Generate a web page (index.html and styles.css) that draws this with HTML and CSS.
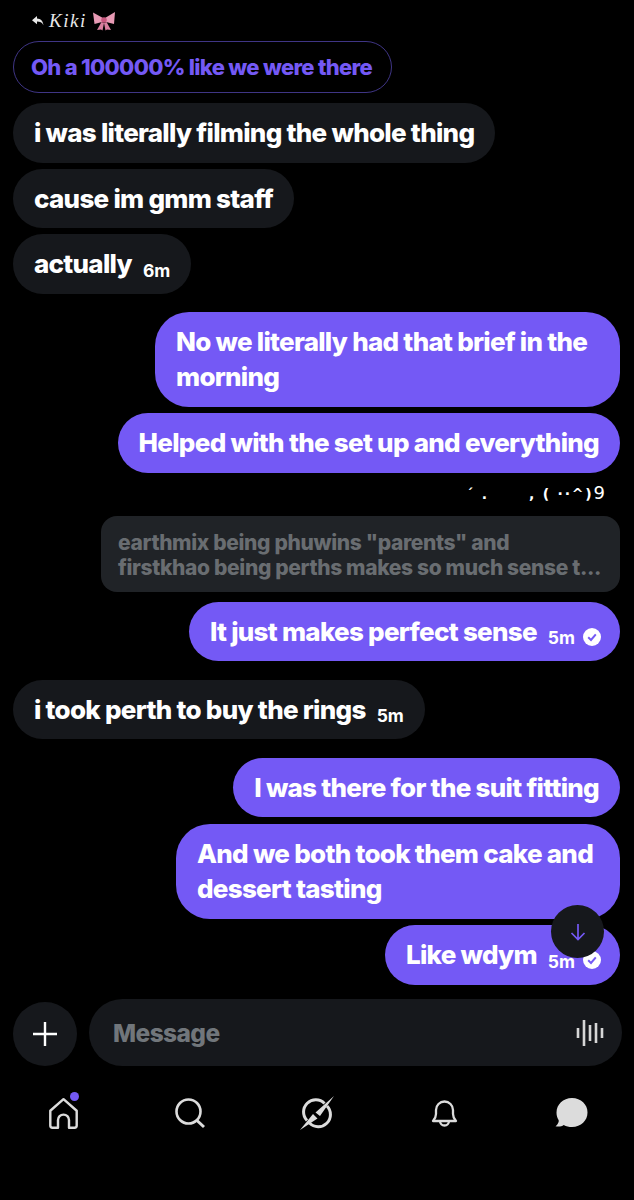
FILE: index.html
```html
<!DOCTYPE html>
<html lang="en">
<head>
<meta charset="utf-8">
<title>Chat</title>
<link rel="stylesheet" href="styles.css">
</head>
<body>
<div class="screen">
  <main class="thread">
    <div class="reply-label">
      <svg class="reply-arrow" viewBox="0 0 12 10"><path d="M5 0 0 4.200 5 8.200V5.600c3 0 5 .8 6.400 3.600C11.200 5 8.500 2.600 5 2.500Z" fill="#e8e8e8"/></svg>
      <span class="reply-name">Kiki</span>
      <svg class="bow" viewBox="0 0 24 20"><path d="M11 7 1 1.500 2.500 13 10 11ZM13 7 23 1 22 13 14 11Z" fill="#e79ab4"/><path d="M9.500 11 5 19l4-.5 1.500 1L12 12ZM14.500 11 19 19l-4-.5-1.500 1L12 12Z" fill="#d97f9f"/><circle cx="12" cy="9" r="2.800" fill="#c9577f"/></svg>
    </div>
    <div class="bubble quoted">Oh a 100000% like we were there</div>
    <div class="group">
      <div class="bubble in">i was literally filming the whole thing</div>
      <div class="bubble in">cause im gmm staff</div>
      <div class="bubble in">actually<span class="time">6m</span></div>
    </div>
    <div class="group out-group gap-a">
      <div class="bubble out two">No we literally had that brief in the morning</div>
      <div class="bubble out">Helped with the set up and everything</div>
    </div>
    <div class="kaomoji">´ .&nbsp;&nbsp;&nbsp;&nbsp;&nbsp;&nbsp;, ( ··^)<span class="kao-nine">9</span></div>
    <div class="bubble shared">earthmix being phuwins "parents" and<br>firstkhao being perths makes so much sense t...</div>
    <div class="bubble out align-right gap-b">It just makes perfect sense<span class="time">5m</span><svg class="check" viewBox="0 0 18 18"><circle cx="9" cy="9" r="9" fill="#fff"/><path d="M5.200 9.300 8 12l4.800-5.600" fill="none" stroke="#7459f5" stroke-width="2"/></svg></div>
    <div class="bubble in align-left gap-c">i took perth to buy the rings<span class="time">5m</span></div>
    <div class="group out-group gap-c">
      <div class="bubble out">I was there for the suit fitting</div>
      <div class="bubble out two narrow">And we both took them cake and dessert tasting</div>
      <div class="bubble out">Like wdym<span class="time">5m</span><svg class="check" viewBox="0 0 18 18"><circle cx="9" cy="9" r="9" fill="#fff"/><path d="M5.200 9.300 8 12l4.800-5.600" fill="none" stroke="#7459f5" stroke-width="2"/></svg></div>
    </div>
    <button class="scroll-down" aria-label="Scroll to bottom">
      <svg viewBox="0 0 18 18" width="18" height="18"><path d="M9 1v15.500M2.500 10 9 16.500 15.500 10" fill="none" stroke="#7459f5" stroke-width="1.700"/></svg>
    </button>
  </main>

  <div class="composer">
    <button class="plus" aria-label="Add">
      <svg viewBox="0 0 24 24" width="24" height="24"><path d="M12 0v24M0 12h24" stroke="#fff" stroke-width="2.400"/></svg>
    </button>
    <div class="input">
      <span class="placeholder">Message</span>
      <svg class="wave" viewBox="0 0 28 28" width="28" height="28"><path d="M2 9v10M8 1v26M14 6v16M20 4v20M26 9v10" stroke="#d6d6d6" stroke-width="2.600"/></svg>
    </div>
  </div>

  <nav class="tabs">
    <div class="tab home">
      <svg viewBox="1 1 30 30" width="33" height="33"><path d="M4 13.500 16 3l12 10.500V27a2 2 0 0 1-2 2h-5v-7a5 5 0 0 0-10 0v7H6a2 2 0 0 1-2-2Z" fill="none" stroke="#dcdcdc" stroke-width="2.200" stroke-linejoin="round"/></svg>
      <span class="dot"></span>
    </div>
    <div class="tab">
      <svg viewBox="0 0 32 32" width="32" height="32"><circle cx="14.500" cy="14.500" r="12" fill="none" stroke="#dcdcdc" stroke-width="2.600"/><path d="M23 23.500 30 30" stroke="#dcdcdc" stroke-width="3"/></svg>
    </div>
    <div class="tab">
      <svg viewBox="0 0 38 38" width="38" height="38"><path d="M26.500 9.500A12 12 0 0 0 9 26.500M11.500 29A12 12 0 0 0 29 12" fill="none" stroke="#dcdcdc" stroke-width="3"/><path d="M36 2 22 22 17.500 18.500ZM2 36 15 20 19.500 24.500Z" fill="#dcdcdc"/></svg>
    </div>
    <div class="tab">
      <svg viewBox="-2 0 32 32" width="32" height="32"><path d="M3 24c1.800-2 3-4 3-7v-4a8.500 8.500 0 0 1 17 0v4c0 3 1.200 5 3 7ZM10 24a4.500 4.500 0 0 0 9 0" fill="none" stroke="#dcdcdc" stroke-width="2.300" stroke-linejoin="round"/></svg>
    </div>
    <div class="tab">
      <svg viewBox="0 0 34 32" width="34" height="32"><path d="M18 1C9 1 2.500 7.500 2.500 15.500c0 3 .8 5.500 2.200 7.700.4 2-1 4.300-3.200 6 3 .8 6.300.3 8.200-1.300 2.500 1.300 5.300 2.100 8.300 2.100 9 0 15.500-6.500 15.500-14.500S27 1 18 1Z" fill="#dcdcdc"/></svg>
    </div>
  </nav>
</div>
</body>
</html>
```

FILE: styles.css
```css
* { box-sizing: border-box; }
html, body { margin: 0; padding: 0; background: #000; }
body { font-family: Inter, "Liberation Sans", sans-serif; }
.screen { width: 634px; height: 1200px; background: #000; overflow: hidden; display: flex; flex-direction: column; }
.thread { position: relative; display: flex; flex-direction: column; align-items: flex-start; padding: 11px 14px 0 13px; height: 999px; }
.reply-label { display: flex; align-items: center; gap: 5px; height: 20px; margin: 0 0 10px 19px; color: #e8e8e8; }
.reply-arrow { width: 12px; height: 10px; }
.reply-name { font-family: "Liberation Serif", serif; font-style: italic; font-size: 19px; line-height: 20px; letter-spacing: 1.500px; }
.bow { width: 24px; height: 20px; }
.bubble { font-weight: 800; font-size: 26px; line-height: 35.500px; letter-spacing: -0.720px; padding: 12px 21px; border-radius: 30px; white-space: nowrap; }
.quoted { height: 52px; width: 379px; padding: 8px 17px; border: 1px solid #3f3585; color: #7459f5; border-radius: 26px; font-size: 22px; letter-spacing: -0.700px; margin-bottom: 10px; }
.group { display: flex; flex-direction: column; gap: 6px; align-items: flex-start; }
.out-group { align-items: flex-end; align-self: flex-end; gap: 6.500px; }
.in { background: #16181c; color: #fff; }
.out { background: #7459f5; color: #fff; }
.two { white-space: normal; width: 465px; }
.narrow { width: 444px; }
.out-group .two { border-radius: 34px; }
.gap-a { margin-top: 18px; }
.gap-b { margin-top: 10px; }
.gap-c { margin-top: 18.500px; }
.align-right { align-self: flex-end; }
.align-left { align-self: flex-start; }
.time { font-size: 17.500px; margin-left: 11px; vertical-align: -3.500px; line-height: 1; letter-spacing: 0; font-weight: 700; }
.check { width: 18px; height: 18px; margin-left: 8px; margin-right: -2px; vertical-align: -5px; }
.kaomoji { align-self: flex-end; height: 22px; margin-top: 9px; margin-bottom: 12px; margin-right: 15px; color: #fff; font-size: 14px; font-weight: 700; line-height: 22px; letter-spacing: 1.800px; white-space: pre; font-family: "DejaVu Sans", sans-serif; }
.kao-nine { font-size: 18px; font-weight: 400; letter-spacing: 0; }
.shared { align-self: flex-end; width: 519px; height: 76px; background: #202327; color: #696d71; border-radius: 16px; padding: 14px 17px; font-size: 21px; line-height: 25px; letter-spacing: -0.350px; overflow: hidden; }
.scroll-down { position: absolute; left: 551px; top: 905px; width: 53px; height: 53px; border-radius: 50%; border: 0; padding: 0; background: #16181c; display: flex; align-items: center; justify-content: center; }
.composer { display: flex; align-items: flex-end; gap: 12px; padding: 0 12px 0 13px; height: 67px; }
.plus { width: 64px; height: 64px; border-radius: 50%; border: 0; padding: 0; background: #16181c; display: flex; align-items: center; justify-content: center; }
.input { flex: 1; height: 67px; border-radius: 34px; background: #16181c; display: flex; align-items: center; justify-content: space-between; padding: 0 18px 0 24px; }
.placeholder { color: #71767b; font-weight: 800; font-size: 24.500px; letter-spacing: -0.600px; }
.tabs { display: grid; grid-template-columns: repeat(5, 1fr); height: 64px; margin-top: 15px; }
.tab { position: relative; display: flex; align-items: center; justify-content: center; }
.dot { position: absolute; left: 70px; top: 11px; width: 9px; height: 9px; border-radius: 50%; background: #7459f5; }
```
